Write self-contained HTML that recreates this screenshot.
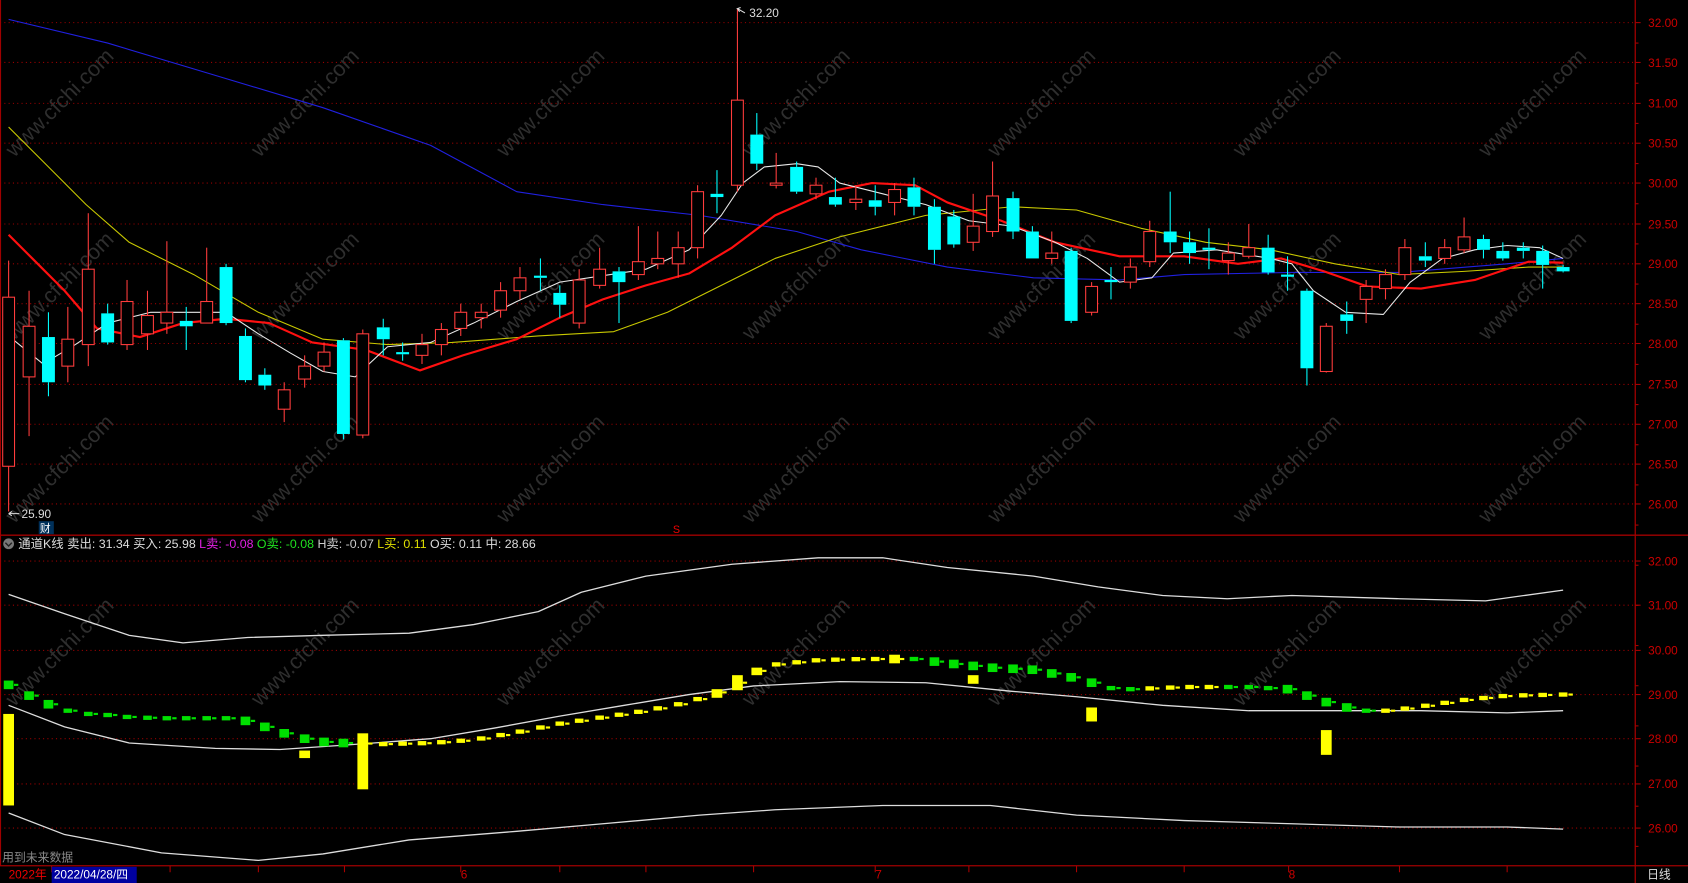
<!DOCTYPE html>
<html><head><meta charset="utf-8"><style>
html,body{margin:0;padding:0;background:#000;overflow:hidden}
svg{display:block}
text{font-family:"Liberation Sans","Noto Sans CJK SC",sans-serif}
</style></head><body>
<svg id="s" width="1688" height="883" viewBox="0 0 1568 820" preserveAspectRatio="none" xmlns="http://www.w3.org/2000/svg">
<rect width="1568" height="820" fill="#000"/>
<g id="wm"></g>
<g id="grid"></g>
<line x1="1519" y1="0" x2="1519" y2="820" stroke="#a00000" stroke-width="1.2"/>
<line x1="0" y1="497" x2="1568" y2="497" stroke="#a00000" stroke-width="1.2"/>
<line x1="0" y1="804" x2="1568" y2="804" stroke="#a00000" stroke-width="1.2"/>
<line x1="0.5" y1="0" x2="0.5" y2="804" stroke="#a00000"/>
<g id="lines"></g>
<g id="candles"></g>
<g id="low"></g>
<text x="696" y="16" fill="#ddd" font-size="11">32.20</text>
<path d="M692 12 L685 8 L688 7 M685 8 L687 11" stroke="#ddd" fill="none"/>
<text x="20" y="481" fill="#ddd" font-size="11">25.90</text>
<path d="M8 477 L18 477 M8 477 L11 475 M8 477 L11 479" stroke="#ddd" fill="none"/>
<rect x="36" y="484" width="14" height="12" fill="#00305a"/>
<text x="37" y="494" fill="#fff" font-size="10">财</text>
<text x="625" y="495" fill="#e00" font-size="10">S</text>
<circle cx="8" cy="505" r="5" fill="#777"/>
<path d="M5 504 L8 507 L11 504" stroke="#222" fill="none" stroke-width="1.3"/>
<text y="509" font-size="11.5"><tspan x="17" fill="#ddd">通道K线 卖出: 31.34 买入: 25.98 </tspan><tspan fill="#e020e0">L卖: -0.08 </tspan><tspan fill="#20e020">O卖: -0.08 </tspan><tspan fill="#ccc">H卖: -0.07 </tspan><tspan fill="#e0e000">L买: 0.11 </tspan><tspan fill="#ddd">O买: 0.11 中: 28.66</tspan></text>
<text x="2" y="800" fill="#888" font-size="11">用到未来数据</text>
<text x="8" y="816" fill="#e00" font-size="11">2022年</text>
<rect x="48" y="805" width="79" height="15" fill="#0000a0"/>
<text x="50" y="816" fill="#fff" font-size="11">2022/04/28/四</text>
<text x="428" y="816" fill="#c00" font-size="11">6</text>
<text x="813" y="816" fill="#c00" font-size="11">7</text>
<text x="1197" y="816" fill="#c00" font-size="11">8</text>
<text x="1530" y="816" fill="#ddd" font-size="11">日线</text>
</svg>
<script>
const NS="http://www.w3.org/2000/svg";
function el(p,t,a){const e=document.createElementNS(NS,t);for(const k in a)e.setAttribute(k,a[k]);document.getElementById(p).appendChild(e);return e;}
// watermarks
for(const cy of [100,270,440,610]){for(let i=0;i<7;i++){const cx=60+i*228;const t=el("wm","text",{x:cx,y:cy,fill:"#2e2e2e","font-size":"20","text-anchor":"middle",transform:`rotate(-45 ${cx} ${cy})`});t.textContent="www.cfchi.com";}}
// grid
const up=[["32.00",21],["31.50",58],["31.00",96],["30.50",133],["30.00",170],["29.50",208],["29.00",245],["28.50",282],["28.00",319],["27.50",357],["27.00",394],["26.50",431],["26.00",468]];
const lo=[["32.00",521],["31.00",562],["30.00",604],["29.00",645],["28.00",686],["27.00",728],["26.00",769]];
for(const [t,y] of up.concat(lo)){el("grid","line",{x1:0,y1:y,x2:1519,y2:y,stroke:"#900", "stroke-dasharray":"1 3"});
el("grid","line",{x1:1519,y1:y,x2:1524,y2:y,stroke:"#a00"});
const tx=el("grid","text",{x:1531,y:y+4,fill:"#c00","font-size":"11"});tx.textContent=t;}
for(let y=40;y<800;y+=37.3)el("grid","line",{x1:1519,y1:y,x2:1522,y2:y,stroke:"#a00"});
for(const x of [48,158,240,320,428,520,600,700,813,900,1000,1100,1197,1300,1400])el("grid","line",{x1:x,y1:804,x2:x,y2:810,stroke:"#a00"});
function pl(pts,c,w,g){el(g||"lines","polyline",{points:pts.map(p=>p.join(",")).join(" "),fill:"none",stroke:c,"stroke-width":w||1,"stroke-linejoin":"round"});}
pl([[8,18],[100,40],[200,70],[300,100],[400,135],[480,178],[560,190],[650,200],[740,215],[800,232],[880,248],[960,258],[1040,260],[1100,255],[1200,253],[1300,253],[1400,245],[1452,240]],"#2020e0");
pl([[8,118],[40,150],[80,190],[120,225],[180,255],[240,290],[300,315],[360,320],[420,318],[500,312],[570,308],[620,290],[670,265],[720,240],[780,220],[860,200],[940,192],[1000,195],[1060,212],[1120,225],[1180,232],[1240,245],[1300,255],[1360,252],[1420,248],[1452,248]],"#c8c800");
pl([[8,218],[30,240],[60,270],[90,305],[130,313],[170,300],[210,296],[250,300],[290,318],[340,325],[390,344],[430,330],[480,315],[520,295],[560,278],[600,265],[640,254],[680,230],[720,200],[770,178],[810,170],[850,172],[880,188],[930,205],[980,225],[1040,238],[1100,238],[1150,245],[1190,240],[1230,252],[1270,266],[1320,268],[1370,260],[1420,243],[1452,244]],"#ff1010",2);
pl([[8,312],[40,338],[70,320],[100,300],[140,290],[180,290],[210,290],[240,310],[270,328],[300,345],[330,350],[360,322],[400,318],[440,300],[480,280],[520,262],[560,256],[600,250],[640,232],[670,200],[690,170],[710,155],[740,152],[760,155],[780,170],[820,180],[860,190],[900,205],[940,210],[980,225],[1010,240],[1040,262],[1070,258],[1090,235],[1130,232],[1180,240],[1200,245],[1220,270],[1250,290],[1285,292],[1310,262],[1340,240],[1370,232],[1400,228],[1430,230],[1452,240]],"#e8e8e8");
const C=[[8,276,433,242,475,'r'],[27,303,350,270,405,'r'],[45,313,355,290,368,'c'],[63,315,340,285,355,'r'],[82,250,320,198,340,'r'],[100,291,318,282,320,'c'],[118,280,320,260,325,'r'],[137,293,310,270,325,'r'],[155,290,300,224,310,'r'],[173,298,303,285,325,'c'],[192,280,300,230,300,'r'],[210,248,300,245,302,'c'],[228,312,353,305,355,'c'],[246,348,358,342,362,'c'],[264,362,380,355,392,'r'],[283,340,352,330,360,'r'],[301,327,340,318,345,'r'],[319,316,403,314,408,'c'],[337,310,404,306,407,'r'],[356,304,315,296,330,'c'],[374,327,329,318,335,'c'],[392,320,330,310,338,'r'],[410,306,320,300,330,'r'],[428,290,305,282,312,'r'],[447,290,295,282,305,'r'],[465,270,288,262,295,'r'],[483,258,270,248,278,'r'],[502,256,258,240,270,'c'],[520,272,283,265,295,'c'],[538,260,300,250,305,'r'],[557,250,265,230,268,'r'],[575,252,262,248,300,'c'],[593,243,255,210,260,'r'],[611,240,245,215,250,'r'],[630,230,245,215,258,'r'],[648,178,230,172,240,'r'],[666,180,183,158,198,'c'],[685,93,172,8,178,'r'],[703,125,152,105,158,'c'],[721,170,172,142,175,'r'],[740,155,178,150,180,'c'],[758,172,180,165,185,'r'],[776,183,190,165,192,'c'],[795,185,188,172,195,'r'],[813,186,192,172,200,'c'],[831,176,188,170,200,'r'],[849,174,192,165,200,'c'],[868,192,232,185,245,'c'],[886,201,227,195,230,'c'],[904,210,225,180,233,'r'],[922,182,215,150,220,'r'],[941,184,215,178,222,'c'],[959,215,240,210,240,'c'],[977,235,240,215,245,'r'],[995,233,298,230,300,'c'],[1014,266,290,262,293,'r'],[1032,260,262,248,278,'c'],[1050,248,262,240,268,'r'],[1068,215,243,205,248,'r'],[1087,215,225,178,235,'c'],[1105,225,235,215,245,'c'],[1123,230,232,212,250,'c'],[1141,235,242,225,255,'r'],[1160,230,238,208,240,'r'],[1178,230,253,218,255,'c'],[1196,255,257,238,270,'c'],[1214,270,342,268,358,'c'],[1232,303,345,300,346,'r'],[1251,292,298,280,310,'c'],[1269,266,278,260,300,'r'],[1287,255,268,250,278,'r'],[1305,230,255,222,260,'r'],[1324,238,242,225,248,'c'],[1342,230,240,222,245,'r'],[1360,220,232,202,235,'r'],[1378,222,232,218,240,'c'],[1396,233,240,225,242,'c'],[1415,230,233,225,240,'c'],[1433,233,246,228,268,'c'],[1452,248,252,246,253,'c']];
for(const [x,t,b,h,l,c] of C){const col=c=='r'?'#ff3c3c':'#00ffff';
el("candles","line",{x1:x,y1:h,x2:x,y2:t,stroke:col});el("candles","line",{x1:x,y1:b,x2:x,y2:l,stroke:col});
if(c=='r')el("candles","rect",{x:x-5.5,y:t,width:11,height:Math.max(b-t,1),fill:"#000",stroke:col});
else el("candles","rect",{x:x-6,y:t,width:12,height:Math.max(b-t,2),fill:col});}
pl([[8,552],[60,570],[120,590],[170,597],[230,592],[300,590],[380,588],[440,580],[500,568],[540,550],[600,535],[680,524],[760,518],[820,518],[880,527],[960,535],[1020,545],[1080,553],[1140,556],[1200,553],[1300,556],[1380,558],[1452,548]],"#ddd",1.2,"low");
pl([[8,755],[60,775],[150,792],[240,799],[300,793],[380,780],[480,772],[560,765],[650,757],[720,752],[820,748],[920,748],[1000,757],[1100,762],[1200,765],[1300,768],[1400,768],[1452,770]],"#ddd",1.2,"low");
pl([[8,655],[60,675],[120,690],[200,695],[260,696],[320,692],[400,686],[460,676],[520,665],[580,655],[640,645],[700,637],[780,633],[860,634],[940,642],[1000,647],[1080,655],[1160,660],[1250,660],[1320,660],[1400,662],[1452,660]],"#ddd",1.2,"low");
const M=[[8,636],[27,646],[45,654],[63,660],[82,663],[100,664],[120,666],[150,667],[220,667],[246,675],[264,681],[283,686],[301,689],[319,690],[356,691],[400,690],[440,687],[480,680],[520,672],[560,666],[600,660],[640,652],[666,643],[685,634],[703,623],[721,617],[760,613],[800,612],[850,612],[880,616],[920,620],[960,622],[995,629],[1014,634],[1032,639],[1050,640],[1100,638],[1160,638],[1196,640],[1214,646],[1232,652],[1251,657],[1269,660],[1290,660],[1320,656],[1360,650],[1400,646],[1452,645]];
function my(x){for(let i=1;i<M.length;i++)if(x<=M[i][0]){const a=M[i-1],b=M[i];return a[1]+(b[1]-a[1])*(x-a[0])/(b[0]-a[0]);}return 645;}
for(const [x] of C){const y=my(x);const yel=(x>=337&&x<=831)||(x>=1287)||(x>=1068&&x<=1123);const big=x<=45||(x>=228&&x<=319)||(x>=850&&x<=1014)||(x>=1196&&x<=1251);
el("low","rect",{x:x-(big?4.5:4),y:y-(big?4:2),width:big?9:8,height:big?8:4,fill:yel?'#ffff00':'#00e000'});
el("low","rect",{x:x+5,y:y-1,width:4,height:2,fill:yel?'#ffff00':'#00e000'});}
for(const [x,t,b] of [[8,663,748],[337,681,733],[685,627,641],[1014,657,670],[1232,678,701],[904,627,635],[831,608,616],[283,697,704],[666,640,648],[703,620,627]])el("low","rect",{x:x-5,y:t,width:10,height:b-t,fill:"#ffff00"});
</script>
</body></html>
